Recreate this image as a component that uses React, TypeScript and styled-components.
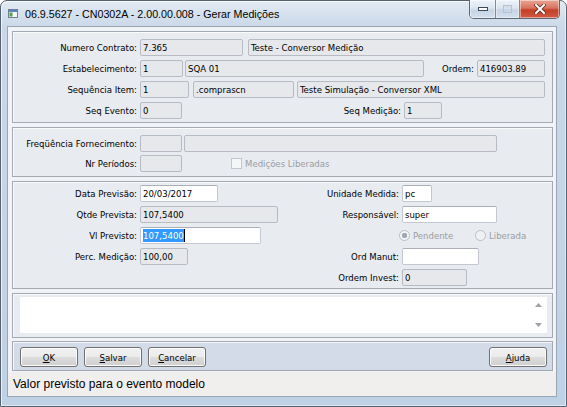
import styled, { createGlobalStyle } from "styled-components";

const GlobalStyle = createGlobalStyle`
  html, body {
    margin: 0;
    padding: 0;
    background: #ffffff;
  }
  body {
    font-family: "DejaVu Sans Condensed", "DejaVu Sans", sans-serif;
    font-size: 9.5px;
    color: #000000;
  }
`;

const Window = styled.div`
  box-sizing: border-box;
  width: 567px;
  height: 407px;
  display: flex;
  flex-direction: column;
  padding: 0 9px 9px 6px;
  border: 1px solid #56626f;
  border-radius: 7px 7px 0 0;
  background: linear-gradient(180deg, #e2eaf3 0, #cad8e8 26px, #bfd1e5 100%);
  box-shadow: inset 1px 1px 0 rgba(255, 255, 255, 0.7),
    inset -1px -1px 0 rgba(255, 255, 255, 0.5);
`;

const TitleBar = styled.div`
  height: 25px;
  flex: none;
  display: flex;
  align-items: flex-start;
`;

const AppIcon = styled.svg`
  flex: none;
  margin: 8px 0 0 1px;
`;

const Title = styled.span`
  margin: 6px 0 0 7px;
  font-family: "Liberation Sans", Arial, sans-serif;
  font-size: 10.7px;
  line-height: 14px;
  color: #000000;
  white-space: nowrap;
`;

const CaptionGroup = styled.div`
  margin: -1px -3px 0 auto;
  display: flex;
  height: 18px;
  border: 1px solid #5c6876;
  border-top: none;
  border-radius: 0 0 5px 5px;
  overflow: hidden;
`;

const CaptionButton = styled.div<{ $w: number; $close?: boolean }>`
  box-sizing: border-box;
  width: ${(p) => p.$w}px;
  height: 100%;
  display: flex;
  align-items: center;
  justify-content: center;
  & + & {
    border-left: 1px solid #7d8a99;
  }
  background: ${(p) =>
    p.$close
      ? "linear-gradient(180deg, #eba595 0%, #d8735d 45%, #c43f27 55%, #d25a42 100%)"
      : "linear-gradient(180deg, #eef3f9 0%, #dbe5f1 45%, #c6d4e5 55%, #d3dfec 100%)"};
  box-shadow: inset 0 0 0 1px rgba(255, 255, 255, 0.45);
`;

const Client = styled.div`
  flex: 1;
  display: flex;
  flex-direction: column;
  border: 1px solid #98a5b4;
  background: #f2f3f6;
`;

const Body = styled.div`
  flex: 1;
  display: flex;
  flex-direction: column;
  padding: 4px 3px 0 4px;
`;

const Panel = styled.div<{ $pad: string; $gap?: number; $mt?: number; $bar?: boolean }>`
  box-sizing: border-box;
  display: flex;
  flex-direction: column;
  gap: ${(p) => p.$gap ?? 4}px;
  margin-top: ${(p) => p.$mt ?? 0}px;
  padding: ${(p) => p.$pad};
  border: 1px solid #a4aab3;
  background: ${(p) => (p.$bar ? "#d3dbe9" : "#e8ebf0")};
  box-shadow: inset 1px 1px 0 rgba(255, 255, 255, 0.8);
`;

const Row = styled.div`
  height: 17px;
  display: flex;
  align-items: center;
`;

const Label = styled.span<{ $w: number }>`
  box-sizing: border-box;
  flex: none;
  width: ${(p) => p.$w}px;
  padding-right: 3px;
  text-align: right;
  white-space: nowrap;
`;

const Field = styled.div<{ $w: number; $ml?: number; $edit?: boolean }>`
  box-sizing: border-box;
  flex: none;
  width: ${(p) => p.$w}px;
  height: 17px;
  margin-left: ${(p) => p.$ml ?? 0}px;
  padding: 0 2px;
  display: flex;
  align-items: center;
  white-space: nowrap;
  overflow: hidden;
  border: 1px solid ${(p) => (p.$edit ? "#c3c8d0" : "#b7bcc4")};
  border-top-color: ${(p) => (p.$edit ? "#abb0b8" : "#b7bcc4")};
  border-radius: 2px;
  background: ${(p) => (p.$edit ? "#ffffff" : "#e6e8ec")};
`;

const Selected = styled.span`
  background: #3399ff;
  color: #ffffff;
  line-height: 13px;
`;

const Caret = styled.span`
  width: 1px;
  height: 13px;
  background: #000000;
`;

const Choice = styled.span<{ $w?: number; $ml?: number }>`
  box-sizing: border-box;
  flex: none;
  width: ${(p) => (p.$w ? `${p.$w}px` : "auto")};
  margin-left: ${(p) => p.$ml ?? 0}px;
  display: flex;
  align-items: center;
  gap: 3px;
  color: #9a9da3;
  white-space: nowrap;
`;

const RadioDot = styled.span<{ $on?: boolean }>`
  box-sizing: border-box;
  width: 11px;
  height: 11px;
  border-radius: 50%;
  border: 1px solid #b9bec6;
  background: ${(p) =>
    p.$on
      ? "radial-gradient(circle, #a3a8b0 0 2.5px, #f4f5f7 3px)"
      : "radial-gradient(circle, #eef0f3 0 3px, #f7f8fa 5px)"};
`;

const CheckBox = styled.span`
  box-sizing: border-box;
  width: 11px;
  height: 11px;
  border: 1px solid #c2c6cd;
  background: #f5f6f8;
`;

const Memo = styled.div`
  height: 36px;
  display: flex;
  justify-content: flex-end;
  background: #ffffff;
`;

const ScrollArrows = styled.div`
  width: 9px;
  margin-right: 4px;
  display: flex;
  flex-direction: column;
  justify-content: space-between;
  padding: 6px 0 6px;
  align-items: center;
`;

const ButtonRow = styled.div`
  display: flex;
  gap: 6px;
`;

const Button = styled.button<{ $push?: boolean }>`
  box-sizing: border-box;
  width: 58px;
  height: 20px;
  margin-left: ${(p) => (p.$push ? "auto" : "0")};
  padding: 0;
  font-family: "DejaVu Sans Condensed", "DejaVu Sans", sans-serif;
  font-size: 9.5px;
  color: #000000;
  border: 1px solid #707070;
  border-radius: 3px;
  background: linear-gradient(180deg, #f2f2f2 0%, #ebebeb 50%, #dddddd 51%, #cfcfcf 100%);
  box-shadow: inset 0 0 0 1px #fbfbfb;
  u {
    text-decoration: underline;
  }
`;

const StatusBar = styled.div`
  height: 24px;
  flex: none;
  display: flex;
  align-items: center;
  padding-left: 5px;
  font-family: "Liberation Sans", Arial, sans-serif;
  font-size: 12px;
  background: #f0efee;
`;

function Arrow({ up }: { up?: boolean }) {
  return (
    <svg width="7" height="4" viewBox="0 0 7 4">
      <path d={up ? "M0 4 L3.5 0 L7 4 Z" : "M0 0 L3.5 4 L7 0 Z"} fill="#9da2a9" />
    </svg>
  );
}

export default function App() {
  return (
    <>
      <GlobalStyle />
      <Window>
        <TitleBar>
          <AppIcon width="10" height="9" viewBox="0 0 10 9">
            <rect x="0.5" y="0.5" width="9" height="8" fill="#f4f6f8" stroke="#6f7f91" />
            <rect x="1" y="1" width="8" height="2" fill="#5a86c0" />
            <rect x="1.5" y="3.5" width="3" height="4" fill="#53a04c" />
          </AppIcon>
          <Title>06.9.5627 - CN0302A - 2.00.00.008 - Gerar Medições</Title>
          <CaptionGroup>
            <CaptionButton $w={25}>
              <svg width="10" height="4" viewBox="0 0 10 4">
                <rect x="0.5" y="0.5" width="9" height="3" fill="#ffffff" stroke="#3f4a57" />
              </svg>
            </CaptionButton>
            <CaptionButton $w={24}>
              <svg width="9" height="8" viewBox="0 0 9 8">
                <rect x="0.5" y="0.5" width="8" height="7" fill="none" stroke="#b7c3d1" />
                <rect x="1.5" y="1.5" width="6" height="1" fill="#c9d3de" />
              </svg>
            </CaptionButton>
            <CaptionButton $w={40} $close>
              <svg width="12" height="10" viewBox="0 0 12 10">
                <path
                  d="M2 1 L10 9 M10 1 L2 9"
                  stroke="#5b2b24"
                  strokeWidth="3.6"
                  strokeLinecap="square"
                />
                <path
                  d="M2 1 L10 9 M10 1 L2 9"
                  stroke="#ffffff"
                  strokeWidth="2"
                  strokeLinecap="square"
                />
              </svg>
            </CaptionButton>
          </CaptionGroup>
        </TitleBar>

        <Client>
          <Body>
            <Panel $pad="7px 0 3px 0">
              <Row>
                <Label $w={127}>Numero Contrato:</Label>
                <Field $w={103}>7.365</Field>
                <Field $w={297} $ml={5}>Teste - Conversor Medição</Field>
              </Row>
              <Row>
                <Label $w={127}>Estabelecimento:</Label>
                <Field $w={43}>1</Field>
                <Field $w={239} $ml={2}>SQA 01</Field>
                <Label $w={53}>Ordem:</Label>
                <Field $w={68}>416903.89</Field>
              </Row>
              <Row>
                <Label $w={127}>Sequência Item:</Label>
                <Field $w={49}>1</Field>
                <Field $w={101} $ml={4}>.comprascn</Field>
                <Field $w={248} $ml={3}>Teste Simulação - Conversor XML</Field>
              </Row>
              <Row>
                <Label $w={127}>Seq Evento:</Label>
                <Field $w={42}>0</Field>
                <Label $w={222}>Seq Medição:</Label>
                <Field $w={38}>1</Field>
              </Row>
            </Panel>

            <Panel $pad="7px 0 4px 0" $gap={3} $mt={4}>
              <Row>
                <Label $w={127}>Freqüência Fornecimento:</Label>
                <Field $w={42} />
                <Field $w={313} $ml={2} />
              </Row>
              <Row>
                <Label $w={127}>Nr Períodos:</Label>
                <Field $w={42} />
                <Choice $ml={49}>
                  <CheckBox />
                  Medições Liberadas
                </Choice>
              </Row>
            </Panel>

            <Panel $pad="3px 0 2px 0" $mt={4}>
              <Row>
                <Label $w={127}>Data Previsão:</Label>
                <Field $w={78} $edit>20/03/2017</Field>
                <Label $w={184}>Unidade Medida:</Label>
                <Field $w={30} $edit>pc</Field>
              </Row>
              <Row>
                <Label $w={127}>Qtde Prevista:</Label>
                <Field $w={138}>107,5400</Field>
                <Label $w={124}>Responsável:</Label>
                <Field $w={95} $edit>super</Field>
              </Row>
              <Row>
                <Label $w={127}>Vl Previsto:</Label>
                <Field $w={121} $edit>
                  <Selected>107,5400</Selected>
                  <Caret />
                </Field>
                <Choice $w={76} $ml={138}>
                  <RadioDot $on />
                  Pendente
                </Choice>
                <Choice>
                  <RadioDot />
                  Liberada
                </Choice>
              </Row>
              <Row>
                <Label $w={127}>Perc. Medição:</Label>
                <Field $w={48}>100,00</Field>
                <Label $w={214}>Ord Manut:</Label>
                <Field $w={77} $edit />
              </Row>
              <Row>
                <Label $w={389}>Ordem Invest:</Label>
                <Field $w={65}>0</Field>
              </Row>
            </Panel>

            <Panel $pad="3px 5px 4px 7px" $mt={4}>
              <Memo>
                <ScrollArrows>
                  <Arrow up />
                  <Arrow />
                </ScrollArrows>
              </Memo>
            </Panel>

            <Panel $pad="5px 5px 3px 7px" $mt={3} $bar>
              <ButtonRow>
                <Button>
                  <u>O</u>K
                </Button>
                <Button>
                  <u>S</u>alvar
                </Button>
                <Button>
                  <u>C</u>ancelar
                </Button>
                <Button $push>
                  <u>A</u>juda
                </Button>
              </ButtonRow>
            </Panel>
          </Body>
          <StatusBar>Valor previsto para o evento modelo</StatusBar>
        </Client>
      </Window>
    </>
  );
}
